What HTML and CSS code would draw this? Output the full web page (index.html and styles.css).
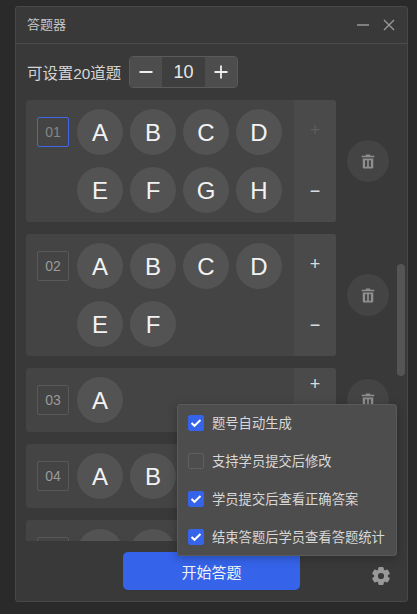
FILE: index.html
```html
<!DOCTYPE html>
<html>
	<head>
		<meta charset="UTF-8">
		<title>答题器</title>
		<link rel="stylesheet" href="styles.css">
	</head>
	<body>
		<div class="panel">
			<div class="title-bar">
				<span class="title">答题器</span>
				<svg class="win-icon" width="14" height="14" viewBox="0 0 14 14"><path d="M1 7h12" stroke="#999" stroke-width="1.6"/></svg>
				<svg class="win-icon" width="14" height="14" viewBox="0 0 14 14"><path d="M2 2l10 10M12 2L2 12" stroke="#999" stroke-width="1.4"/></svg>
			</div>
			<div class="setting">
				<span class="setting-label">可设置20道题</span>
				<div class="stepper">
					<span class="step-btn"><svg width="14" height="14" viewBox="0 0 14 14"><path d="M0.5 7h13" stroke="#eee" stroke-width="1.8"/></svg></span>
					<span class="step-num">10</span>
					<span class="step-btn"><svg width="14" height="14" viewBox="0 0 14 14"><path d="M0.5 7h13M7 0.5v13" stroke="#eee" stroke-width="1.8"/></svg></span>
				</div>
			</div>
			<div class="list">
				<div class="row">
					<div class="card">
						<div class="num num-active">01</div>
						<div class="options">
							<span class="opt">A</span><span class="opt">B</span><span class="opt">C</span><span class="opt">D</span>
							<span class="opt">E</span><span class="opt">F</span><span class="opt">G</span><span class="opt">H</span>
						</div>
						<div class="side"><span class="side-btn side-off">+</span><span class="side-btn">−</span></div>
					</div>
					<span class="trash"><svg width="14" height="15" viewBox="0 0 16 17"><use href="#trash"/></svg></span>
				</div>
				<div class="row">
					<div class="card">
						<div class="num">02</div>
						<div class="options">
							<span class="opt">A</span><span class="opt">B</span><span class="opt">C</span><span class="opt">D</span>
							<span class="opt">E</span><span class="opt">F</span>
						</div>
						<div class="side"><span class="side-btn">+</span><span class="side-btn">−</span></div>
					</div>
					<span class="trash"><svg width="14" height="15" viewBox="0 0 16 17"><use href="#trash"/></svg></span>
				</div>
				<div class="row">
					<div class="card">
						<div class="num">03</div>
						<div class="options">
							<span class="opt">A</span>
						</div>
						<div class="side"><span class="side-btn">+</span><span class="side-btn">−</span></div>
					</div>
					<span class="trash"><svg width="14" height="15" viewBox="0 0 16 17"><use href="#trash"/></svg></span>
				</div>
				<div class="row">
					<div class="card">
						<div class="num">04</div>
						<div class="options">
							<span class="opt">A</span><span class="opt">B</span>
						</div>
						<div class="side"><span class="side-btn">+</span><span class="side-btn">−</span></div>
					</div>
					<span class="trash"><svg width="14" height="15" viewBox="0 0 16 17"><use href="#trash"/></svg></span>
				</div>
				<div class="row">
					<div class="card">
						<div class="num">05</div>
						<div class="options">
							<span class="opt">A</span><span class="opt">B</span>
						</div>
						<div class="side"><span class="side-btn">+</span><span class="side-btn">−</span></div>
					</div>
					<span class="trash"><svg width="14" height="15" viewBox="0 0 16 17"><use href="#trash"/></svg></span>
				</div>
				<div class="scroll-thumb"></div>
			</div>
			<div class="footer">
				<button class="start-btn">开始答题</button>
				<svg class="gear" width="20" height="20" viewBox="0 0 20 20">
					<circle cx="10" cy="10" r="5" fill="none" stroke="#999" stroke-width="3.8"/>
					<g fill="#999">
						<rect x="7.300" y="1" width="5.400" height="4" rx="1.200"/>
						<rect x="7.300" y="1" width="5.400" height="4" rx="1.200" transform="rotate(60 10 10)"/>
						<rect x="7.300" y="1" width="5.400" height="4" rx="1.200" transform="rotate(120 10 10)"/>
						<rect x="7.300" y="1" width="5.400" height="4" rx="1.200" transform="rotate(180 10 10)"/>
						<rect x="7.300" y="1" width="5.400" height="4" rx="1.200" transform="rotate(240 10 10)"/>
						<rect x="7.300" y="1" width="5.400" height="4" rx="1.200" transform="rotate(300 10 10)"/>
					</g>
				</svg>
			</div>
			<div class="popover">
				<div class="pop-item"><span class="check check-on"><svg width="12" height="12" viewBox="0 0 12 12"><use href="#tick"/></svg></span><span class="pop-text">题号自动生成</span></div>
				<div class="pop-item"><span class="check"></span><span class="pop-text">支持学员提交后修改</span></div>
				<div class="pop-item"><span class="check check-on"><svg width="12" height="12" viewBox="0 0 12 12"><use href="#tick"/></svg></span><span class="pop-text">学员提交后查看正确答案</span></div>
				<div class="pop-item"><span class="check check-on"><svg width="12" height="12" viewBox="0 0 12 12"><use href="#tick"/></svg></span><span class="pop-text">结束答题后学员查看答题统计</span></div>
			</div>
		</div>
		<svg class="defs" width="0" height="0">
			<defs>
				<g id="trash">
					<path fill="#8f8f8f" d="M5.500 0.500h5v1.300h4.700v1.700H0.800V1.800h4.700z"/>
					<path fill="#8f8f8f" fill-rule="evenodd" d="M2 5h12v10c0 0.900-0.700 1.500-1.500 1.500h-9C2.700 16.500 2 15.900 2 15zM4.700 7v7.500h2.300V7zM9 7v7.500h2.300V7z"/>
				</g>
				<path id="tick" d="M1.500 6l3 2.800L10.500 3" fill="none" stroke="#fff" stroke-width="2"/>
			</defs>
		</svg>
	</body>
</html>
```

FILE: styles.css
```css
*{
	margin: 0;
	padding: 0;
	box-sizing: border-box;
}
html, body{
	height: 100%;
	overflow: hidden;
}
body{
	background: #2a2a2a;
	padding: 6px 9px 12px 15px;
	font-family: "Liberation Sans", "Noto Sans CJK SC", sans-serif;
	color: #d8d8d8;
}
.panel{
	width: 393px;
	height: 596px;
	background: #393939;
	border: 1px solid #484848;
	border-radius: 3px;
	position: relative;
	overflow: hidden;
}
.title-bar{
	height: 37px;
	border-bottom: 1px solid #4c4c4c;
	display: flex;
	align-items: center;
	padding: 0 11px 0 11px;
	gap: 12.5px;
}
.title{
	flex: 1;
	font-size: 13px;
	color: #c4c4c4;
	margin-bottom: 3px;
}
.setting{
	display: flex;
	align-items: center;
	margin-top: 12px;
	padding-left: 11px;
	gap: 8px;
}
.setting-label{
	font-size: 15.4px;
	color: #d4d4d4;
}
.stepper{
	width: 109px;
	height: 32px;
	border: 1px solid #5a5a5a;
	border-radius: 4px;
	display: flex;
	overflow: hidden;
}
.step-btn{
	width: 32px;
	background: #4d4d4d;
	display: flex;
	align-items: center;
	justify-content: center;
}
.step-num{
	flex: 1;
	text-align: center;
	font-size: 18px;
	line-height: 30px;
	color: #e8e8e8;
	background: #3f3f3f;
}
.list{
	height: 441px;
	margin-top: 12px;
	padding-left: 10px;
	position: relative;
	overflow: hidden;
}
.row{
	display: flex;
	align-items: center;
	gap: 11px;
	margin-bottom: 12px;
}
.card{
	width: 310px;
	background: #444;
	border-radius: 3px;
	display: flex;
	align-items: flex-start;
	overflow: hidden;
}
.num{
	width: 32px;
	height: 30px;
	margin: 17px 0 0 11px;
	border: 1px solid #595959;
	border-radius: 2px;
	font-size: 14px;
	line-height: 28px;
	text-align: center;
	color: #9a9a9a;
}
.num-active{
	border: 1px solid #4068e0;
	color: #858585;
}
.options{
	width: 205px;
	margin: 9px 0 9px 8px;
	display: flex;
	flex-wrap: wrap;
	gap: 12px 7px;
}
.opt{
	width: 46px;
	height: 46px;
	border-radius: 50%;
	background: #535353;
	color: #f2f2f2;
	font-size: 24px;
	line-height: 47px;
	text-align: center;
}
.side{
	width: 42px;
	margin-left: auto;
	align-self: stretch;
	background: #4a4a4a;
	display: flex;
	flex-direction: column;
}
.side-btn{
	flex: 1;
	display: flex;
	align-items: center;
	justify-content: center;
	font-size: 18px;
	color: #dcdcdc;
}
.side-off{
	color: #5e5e5e;
}
.trash{
	width: 42px;
	height: 42px;
	border-radius: 50%;
	background: #444;
	display: flex;
	align-items: center;
	justify-content: center;
}
.scroll-thumb{
	position: absolute;
	left: 381px;
	top: 164px;
	width: 8px;
	height: 112px;
	border-radius: 4px;
	background: #555;
}
.footer{
	display: flex;
	align-items: center;
	margin-top: 11px;
	padding-left: 107px;
}
.start-btn{
	width: 177px;
	height: 38px;
	border: none;
	border-radius: 5px;
	background: #3563e9;
	color: #f2f2f2;
	font-family: inherit;
	font-size: 15px;
}
.gear{
	margin-left: 71px;
	margin-top: 9px;
}
.popover{
	position: absolute;
	left: 161px;
	top: 397px;
	width: 220px;
	height: 152px;
	background: #4d4d4d;
	border: 1px solid #5a5a5a;
	border-radius: 3px;
	box-shadow: 0 2px 10px rgba(0, 0, 0, .25);
}
.pop-item{
	height: 38px;
	display: flex;
	align-items: center;
	gap: 8px;
	padding-left: 10px;
	font-size: 13.3px;
	color: #d8d8d8;
}
.pop-item:first-child{
	margin-top: -1px;
}
.pop-text{
	margin-bottom: 2px;
}
.check{
	width: 16px;
	height: 16px;
	border: 1px solid #5f5f5f;
	border-radius: 2px;
	display: flex;
	align-items: center;
	justify-content: center;
}
.check-on{
	background: #3563e9;
	border-color: #3563e9;
}
.defs{
	position: absolute;
}
```
